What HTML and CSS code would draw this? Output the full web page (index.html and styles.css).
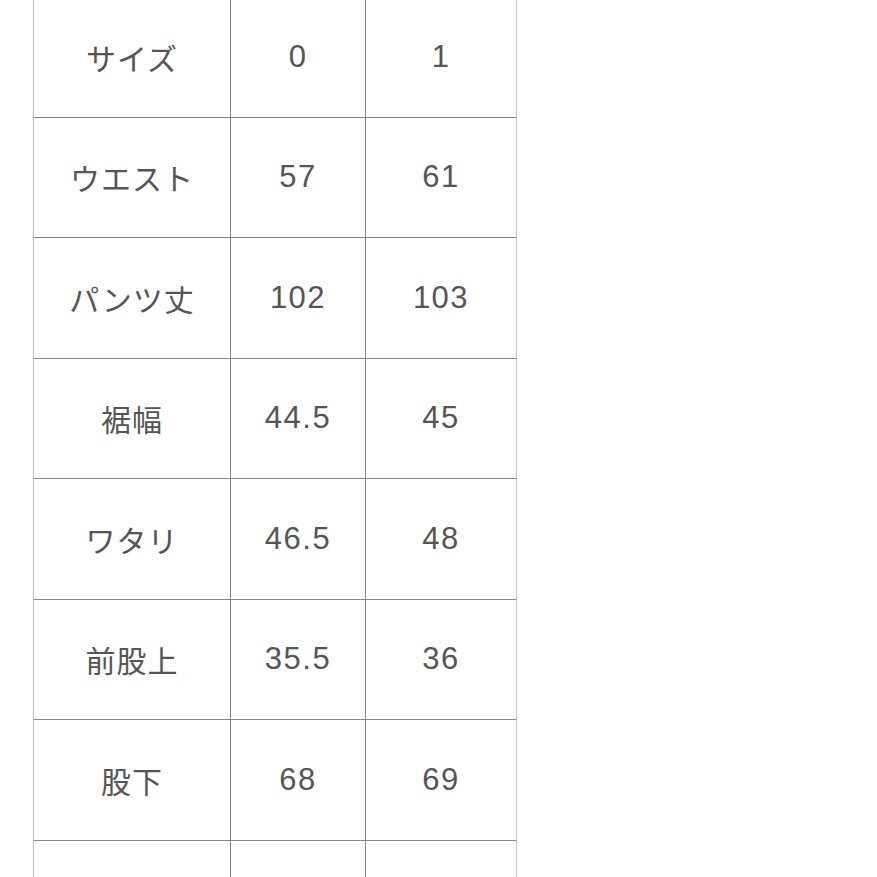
FILE: index.html
```html
<!DOCTYPE html>
<html lang="ja">
<head>
<meta charset="utf-8">
<link rel="stylesheet" href="styles.css">
</head>
<body>
<div class="size-table">
  <div class="cell label">サイズ</div><div class="cell num">0</div><div class="cell num last">1</div>
  <div class="cell label">ウエスト</div><div class="cell num">57</div><div class="cell num last">61</div>
  <div class="cell label">パンツ丈</div><div class="cell num">102</div><div class="cell num last">103</div>
  <div class="cell label">裾幅</div><div class="cell num">44.5</div><div class="cell num last">45</div>
  <div class="cell label">ワタリ</div><div class="cell num">46.5</div><div class="cell num last">48</div>
  <div class="cell label">前股上</div><div class="cell num">35.5</div><div class="cell num last">36</div>
  <div class="cell label">股下</div><div class="cell num">68</div><div class="cell num last">69</div>
  <div class="cell label"></div><div class="cell num"></div><div class="cell num last"></div>
</div>
</body>
</html>
```
FILE: styles.css
```css
html, body {
  margin: 0;
  padding: 0;
  background: #fff;
  overflow: hidden;
}
body {
  width: 877px;
  height: 877px;
}
.size-table {
  display: grid;
  grid-template-columns: 198px 135px 151px;
  grid-auto-rows: 120.5px;
  margin-left: 33px;
  margin-top: -3px;
  font-family: "Liberation Sans", "Noto Sans CJK JP", sans-serif;
  font-size: 30px;
  color: #555;
}
.cell {
  display: flex;
  align-items: center;
  justify-content: center;
  border-right: 1.5px solid #858585;
  border-bottom: 1.5px solid #858585;
  box-sizing: border-box;
  letter-spacing: 1px;
}
.num {
  font-size: 31px;
  letter-spacing: 1.5px;
}
.label {
  border-left: 1.5px solid #c0c0c0;
}
.last {
  border-right: 1.5px solid #c6c6c6;
}
```
